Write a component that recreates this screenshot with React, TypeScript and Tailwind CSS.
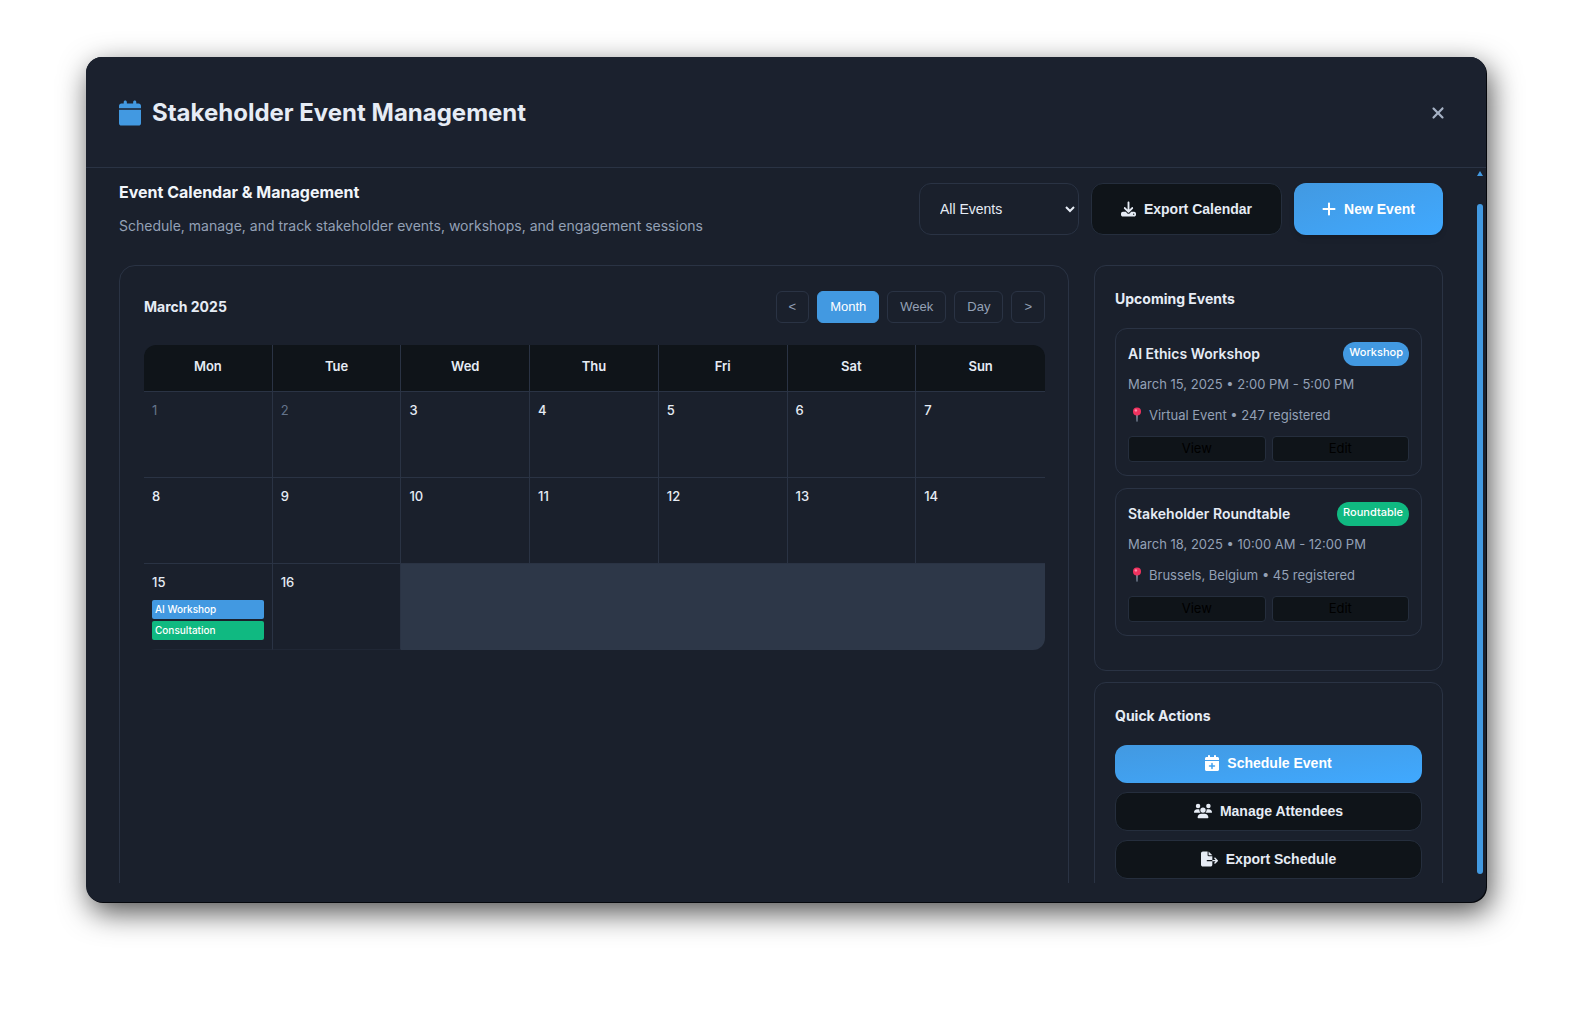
// src/App.tsx

import React from 'react';
import {
  FaCalendar,
  FaCalendarPlus,
  FaDownload,
  FaFileExport,
  FaPlus,
  FaUsers,
  FaXmark,
} from 'react-icons/fa6';

interface CalendarEvent {
  label: string;
  color: string;
}

interface Day {
  date: number;
  muted?: boolean;
  events?: CalendarEvent[];
}

interface UpcomingEvent {
  title: string;
  badge: string;
  badgeColor: string;
  time: string;
  place: string;
}

const weekdays = ['Mon', 'Tue', 'Wed', 'Thu', 'Fri', 'Sat', 'Sun'];

const weeks: Day[][] = [
  [
    { date: 1, muted: true },
    { date: 2, muted: true },
    { date: 3 },
    { date: 4 },
    { date: 5 },
    { date: 6 },
    { date: 7 },
  ],
  [{ date: 8 }, { date: 9 }, { date: 10 }, { date: 11 }, { date: 12 }, { date: 13 }, { date: 14 }],
  [
    {
      date: 15,
      events: [
        { label: 'AI Workshop', color: 'bg-[#4299e1]' },
        { label: 'Consultation', color: 'bg-[#10b981]' },
      ],
    },
    { date: 16 },
  ],
];

const upcoming: UpcomingEvent[] = [
  {
    title: 'AI Ethics Workshop',
    badge: 'Workshop',
    badgeColor: 'bg-[#4299e1]',
    time: 'March 15, 2025 • 2:00 PM - 5:00 PM',
    place: 'Virtual Event • 247 registered',
  },
  {
    title: 'Stakeholder Roundtable',
    badge: 'Roundtable',
    badgeColor: 'bg-[#10b981]',
    time: 'March 18, 2025 • 10:00 AM - 12:00 PM',
    place: 'Brussels, Belgium • 45 registered',
  },
];

const views = ['<', 'Month', 'Week', 'Day', '>'];

const PinIcon: React.FC = () => (
  <svg className="w-[18px] h-[16px] shrink-0" viewBox="0 0 18 16" aria-hidden="true">
    <path d="M8.2 7h1.6l-.3 7.2-.5.8-.5-.8z" fill="#8d9bb0" />
    <circle cx="9" cy="4.6" r="4" fill="#f0325f" />
    <circle cx="7.9" cy="3.4" r="1.2" fill="#ff8fab" />
  </svg>
);

const Header: React.FC = () => (
  <header className="flex items-center justify-between h-[111px] shrink-0 pt-0.5 pl-[33px] pr-10 border-b border-[#2a3344] bg-[#1b212e]">
    <h1 className="flex items-center gap-[11px] text-2xl font-bold text-[#e6ecf5]">
      <FaCalendar className="w-[22px] h-[26px] text-[#4299e1]" />
      Stakeholder Event Management
    </h1>
    <button type="button" aria-label="Close" className="text-[#a5b1c4]">
      <FaXmark className="w-4 h-[18px]" />
    </button>
  </header>
);

const Toolbar: React.FC = () => (
  <div className="flex items-start justify-between mb-[29px]">
    <div className="pt-px">
      <h2 className="text-base leading-4 font-bold text-[#f1f5fa]">Event Calendar &amp; Management</h2>
      <p className="mt-4 text-sm leading-5 text-[#94a1b6]">
        Schedule, manage, and track stakeholder events, workshops, and engagement sessions
      </p>
    </div>
    <div className="flex gap-3 h-[52px] font-[Liberation_Sans] text-sm">
      <select
        aria-label="Filter events"
        className="w-[160px] pl-4 border border-[#2a3344] rounded-xl bg-[#1a202c] text-[#e6ecf5]"
      >
        <option>All Events</option>
      </select>
      <button
        type="button"
        className="flex items-center justify-center gap-2 w-[191px] border border-[#252e3d] rounded-xl bg-[#0f1419] font-bold text-[#e6ecf5]"
      >
        <FaDownload className="w-[15px] h-[16px]" />
        Export Calendar
      </button>
      <button
        type="button"
        className="flex items-center justify-center gap-2 w-[149px] rounded-xl bg-linear-to-br from-[#4299e1] to-[#40a9ff] font-bold text-white shadow-md"
      >
        <FaPlus className="w-[14px] h-[16px]" />
        New Event
      </button>
    </div>
  </div>
);

const Calendar: React.FC = () => (
  <section className="flex-1 min-w-0 pl-6 pr-[23px] pt-[25px] border border-[#2a3344] rounded-2xl">
    <div className="flex items-center justify-between mb-[22px]">
      <h3 className="text-sm font-bold text-[#e6ecf5]">March 2025</h3>
      <div className="flex gap-2 font-[Liberation_Sans] text-[13px]">
        {views.map((view) => (
          <button
            key={view}
            type="button"
            className={
              view === 'Month'
                ? 'h-8 px-3 border border-[#4299e1] rounded-md bg-[#4299e1] text-white'
                : 'h-8 px-3 border border-[#2a3344] rounded-md text-[#94a1b6]'
            }
          >
            {view}
          </button>
        ))}
      </div>
    </div>

    <div className="rounded-xl overflow-hidden">
      <table className="w-full table-fixed border-separate border-spacing-0 text-[13px]">
        <thead>
          <tr>
            {weekdays.map((day) => (
              <th
                key={day}
                className="h-[47px] pb-0.5 border-r border-b border-[#2a3344] last:border-r-0 bg-[#0f1419] font-semibold text-[#e6ecf5]"
              >
                {day}
              </th>
            ))}
          </tr>
        </thead>
        <tbody>
          {weeks.map((week, idx) => (
            <tr key={idx} className="group">
              {week.map((day) => (
                <td
                  key={day.date}
                  className="h-[86px] px-2 pt-2 pb-0 align-top border-r border-b border-[#2a3344] group-last:border-b-[#202735] last:border-r-0"
                >
                  <div className={day.muted ? 'leading-5 text-[#64748b]' : 'leading-5 font-medium text-[#e6ecf5]'}>
                    {day.date}
                  </div>
                  {day.events && (
                    <div className="flex flex-col gap-0.5 mt-2">
                      {day.events.map((event) => (
                        <div
                          key={event.label}
                          className={`${event.color} px-[3px] rounded-xs text-[10px] leading-[19px] font-medium text-white`}
                        >
                          {event.label}
                        </div>
                      ))}
                    </div>
                  )}
                </td>
              ))}
              {week.length < 7 && <td colSpan={7 - week.length} className="bg-[#2d3748]"></td>}
            </tr>
          ))}
        </tbody>
      </table>
    </div>
  </section>
);

const Sidebar: React.FC = () => (
  <aside className="flex flex-col gap-[11px] w-[349px] shrink-0">
    <section className="px-5 pt-[23px] pb-[34px] border border-[#2a3344] rounded-xl">
      <h3 className="text-sm leading-5 font-bold text-[#e6ecf5]">Upcoming Events</h3>
      <div className="flex flex-col gap-3 mt-[19px]">
        {upcoming.map((event) => (
          <article key={event.title} className="px-3 py-[13px] border border-[#2a3344] rounded-xl text-[13px] text-[#94a1b6]">
            <div className="flex items-center justify-between">
              <h4 className="text-sm leading-6 font-semibold text-[#e6ecf5]">{event.title}</h4>
              <span
                className={`${event.badgeColor} px-1.5 pb-[3px] rounded-xl text-[11px] leading-[21px] font-medium text-white`}
              >
                {event.badge}
              </span>
            </div>
            <p className="mt-2 leading-5">{event.time}</p>
            <p className="flex items-center gap-[3px] mt-[11px] leading-5">
              <PinIcon />
              {event.place}
            </p>
            <div className="grid grid-cols-2 gap-1.5 mt-[11px] text-black">
              <button type="button" className="h-[26px] border border-[#252e3d] rounded-sm bg-[#0f1419]">
                View
              </button>
              <button type="button" className="h-[26px] border border-[#252e3d] rounded-sm bg-[#0f1419]">
                Edit
              </button>
            </div>
          </article>
        ))}
      </div>
    </section>

    <section className="px-5 pt-[23px] pb-5 border border-[#2a3344] rounded-xl">
      <h3 className="text-sm leading-5 font-bold text-[#e6ecf5]">Quick Actions</h3>
      <div className="flex flex-col gap-[9px] mt-[19px] font-[Liberation_Sans] text-sm font-bold text-[#e6ecf5]">
        <button
          type="button"
          className="flex items-center justify-center gap-2 h-[38px] pb-0.5 rounded-xl bg-linear-to-br from-[#4299e1] to-[#40a9ff] text-white"
        >
          <FaCalendarPlus className="w-[14px] h-[16px]" />
          Schedule Event
        </button>
        <button
          type="button"
          className="flex items-center justify-center gap-2 h-[39px] pb-0.5 border border-[#252e3d] rounded-xl bg-[#0f1419]"
        >
          <FaUsers className="w-[18px] h-[16px]" />
          Manage Attendees
        </button>
        <button
          type="button"
          className="flex items-center justify-center gap-2 h-[39px] pb-0.5 border border-[#252e3d] rounded-xl bg-[#0f1419]"
        >
          <FaFileExport className="w-[17px] h-[16px]" />
          Export Schedule
        </button>
      </div>
    </section>
  </aside>
);

const App: React.FC = () => {
  return (
    <div className="h-screen pt-[57px] pr-[90px] pb-[108px] pl-[86px] bg-white font-[Inter]">
      <main className="flex flex-col h-full pb-[19px] rounded-2xl overflow-hidden bg-[#1a202c] shadow-[1px_1px_0_#05070c,4px_10px_30px_rgba(0,0,0,0.7)]">
        <Header />
        <div className="flex flex-1 min-h-0">
          <div className="flex-1 min-w-0 overflow-y-auto pt-[15px] pr-[34px] pl-[33px] [scrollbar-width:none]">
            <Toolbar />
            <div className="flex gap-[25px]">
              <Calendar />
              <Sidebar />
            </div>
          </div>
          {/* Scroll track */}
          <div className="flex flex-col items-center w-[6px] mr-[3px] pt-[3px] pb-[9px]" aria-hidden="true">
            <svg className="w-[6px] h-[6px]" viewBox="0 0 6 6">
              <path d="M3 0l3 5H0z" fill="#4299e1" />
            </svg>
            <div className="flex-1 w-full mt-[27px] rounded-full bg-[#4299e1]"></div>
          </div>
        </div>
      </main>
    </div>
  );
};

export default App;
